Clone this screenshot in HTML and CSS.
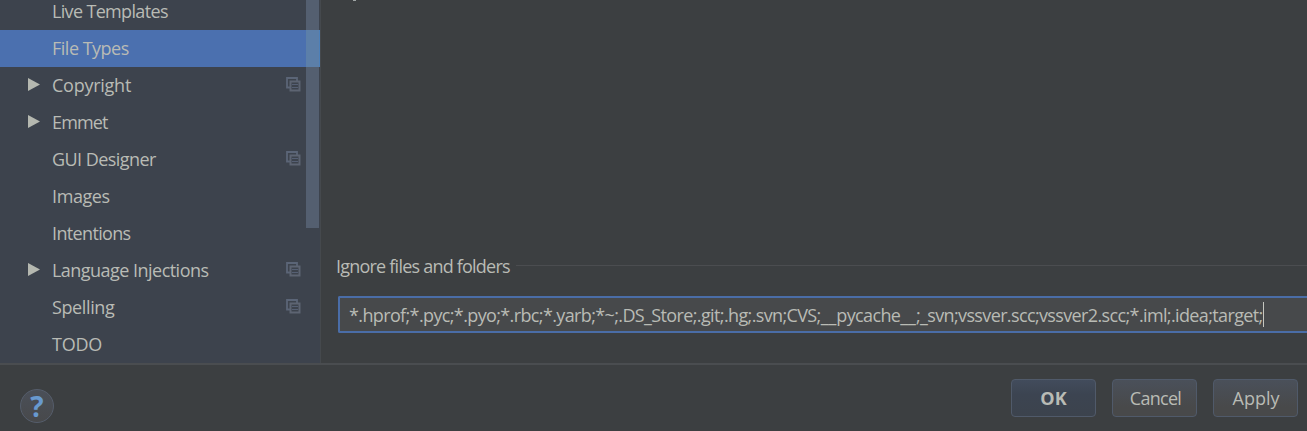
FILE: index.html
```html
<!DOCTYPE html>
<html lang="en">
<head>
<meta charset="utf-8">
<title>Settings</title>
<link rel="stylesheet" href="styles.css">
</head>
<body>
<svg class="defs" aria-hidden="true">
  <symbol id="copy" viewBox="0 0 15 15">
    <path d="M4 10.5H1V1h10v3" fill="none" stroke="#5b6577" stroke-width="1.8"/>
    <path d="M4.5 4.5h9v9h-9z" fill="none" stroke="#5d6472" stroke-width="2"/>
    <path d="M6 7.5h6M6 10.5h6" stroke="#566074" stroke-width="1.2"/>
  </symbol>
  <symbol id="arrow" viewBox="0 0 12 13"><path d="M0 0l12 6.5L0 13z" fill="#b5b8b0"/></symbol>
</svg>
<div class="dialog">
  <div class="body">
    <nav class="sidebar">
      <ul class="tree">
        <li class="row"><span class="label live">Live Templates</span></li>
        <li class="row selected"><span class="label file">File Types</span></li>
        <li class="row"><svg class="arrow"><use href="#arrow"/></svg><span class="label copyright">Copyright</span><svg class="copy"><use href="#copy"/></svg></li>
        <li class="row"><svg class="arrow"><use href="#arrow"/></svg><span class="label emmet">Emmet</span></li>
        <li class="row"><span class="label gui">GUI Designer</span><svg class="copy"><use href="#copy"/></svg></li>
        <li class="row"><span class="label images">Images</span></li>
        <li class="row"><span class="label intentions">Intentions</span></li>
        <li class="row"><svg class="arrow"><use href="#arrow"/></svg><span class="label language">Language Injections</span><svg class="copy"><use href="#copy"/></svg></li>
        <li class="row"><span class="label spelling">Spelling</span><svg class="copy"><use href="#copy"/></svg></li>
        <li class="row"><span class="label todo">TODO</span></li>
      </ul>
      <div class="scrollbar"></div>
    </nav>
    <main class="content">
      <span class="clip"></span>
      <div class="heading"><span class="title">Ignore files and folders</span><span class="rule"></span></div>
      <div class="field"><span class="value">*.hprof;*.pyc;*.pyo;*.rbc;*.yarb;*~;.DS_Store;.git;.hg;.svn;CVS;<span class="wide">__</span>pycache<span class="wide">__</span>;_svn;vssver.scc;vssver2.scc;*.iml;.idea;target;</span><span class="caret"></span></div>
    </main>
  </div>
  <footer class="footer">
    <button class="help">?</button>
    <div class="actions">
      <button class="btn primary">OK</button>
      <button class="btn cancel">Cancel</button>
      <button class="btn apply">Apply</button>
    </div>
  </footer>
</div>
</body>
</html>
```
FILE: styles.css
```css
* { box-sizing: border-box; }
body {
  margin: 0;
  background: #3c3f41;
  color: #b9bbb5;
  font: 18px/37px "Open Sans", "Noto Sans", sans-serif;
}
.defs { position: absolute; width: 0; height: 0; }
.dialog { width: 1307px; height: 431px; overflow: hidden; display: flex; flex-direction: column; }
.body { height: 363px; display: flex; overflow: hidden; }
.sidebar { position: relative; width: 321px; flex: none; background: #3d434d; border-right: 1px solid #45494d; }
.tree { list-style: none; margin: -7px 0 0; padding: 0; }
.row { height: 37px; padding: 0 20px 0 52px; display: flex; position: relative; white-space: nowrap; }
.selected { background: linear-gradient(90deg, #4b70af 306px, #4c80ba 306px); }
.label { display: block; }
.live { letter-spacing: -.66px; }
.file { letter-spacing: -.5px; }
.copyright { letter-spacing: -.25px; }
.emmet { letter-spacing: -.85px; }
.gui { letter-spacing: -.55px; }
.images { letter-spacing: -.4px; }
.intentions { letter-spacing: -.65px; }
.language { letter-spacing: -.53px; }
.spelling { letter-spacing: -.38px; }
.todo { letter-spacing: -.25px; }
.arrow { position: absolute; left: 28px; top: 11px; width: 12px; height: 13px; }
.copy { width: 15px; height: 15px; margin: 10px -1px 0 auto; }
.scrollbar { position: absolute; left: 306px; top: 0; width: 13px; height: 228px; background: rgba(111, 125, 150, .48); }
.content { flex: 1; min-width: 0; display: flex; flex-direction: column; }
.clip { width: 3px; height: 1px; margin-left: 32px; background: #9fa5a5; }
.heading { display: flex; align-items: center; height: 37px; margin: 246px 0 0 15px; }
.title { padding-top: 1px; white-space: nowrap; letter-spacing: -.78px; }
.rule { flex: 1; height: 1px; margin: -1px 0 0 6px; background: #4b4d50; }
.field {
  height: 37px; margin: 12px 0 0 17px; padding-left: 9px; display: flex; align-items: center;
  border: 2px solid #4a6da7; border-right: 0; border-radius: 2px 0 0 2px; background: #47494b; white-space: nowrap;
}
.value { padding-top: 2px; letter-spacing: -.63px; }
.wide { letter-spacing: -.1px; }
.caret { width: 1px; height: 25px; background: #c5c6c0; }
.footer { height: 68px; border-top: 2px solid #4a4d50; padding: 14px 9px 0 20px; display: flex; justify-content: space-between; }
button { font-family: inherit; color: inherit; padding: 0; }
.help {
  width: 34px; height: 34px; margin-top: 10px; border: 1px solid #555d6b; border-radius: 50%;
  background: linear-gradient(#4a4f58, #48494b); color: #6899cf; font-size: 28px; font-weight: 700; line-height: 31px;
}
.actions { display: flex; gap: 16px; }
.btn {
  width: 85px; height: 38px; border: 1px solid #505a6a; border-radius: 4px;
  background: linear-gradient(#4a505a, #48494a 75%); font-size: 18px; line-height: 36px;
}
.primary { background: linear-gradient(#424c5c, #3c4451 40%, #3c434d); font-weight: 700; }
.cancel { padding-left: 2px; letter-spacing: -.7px; }
.apply { padding-left: 1px; }
```
